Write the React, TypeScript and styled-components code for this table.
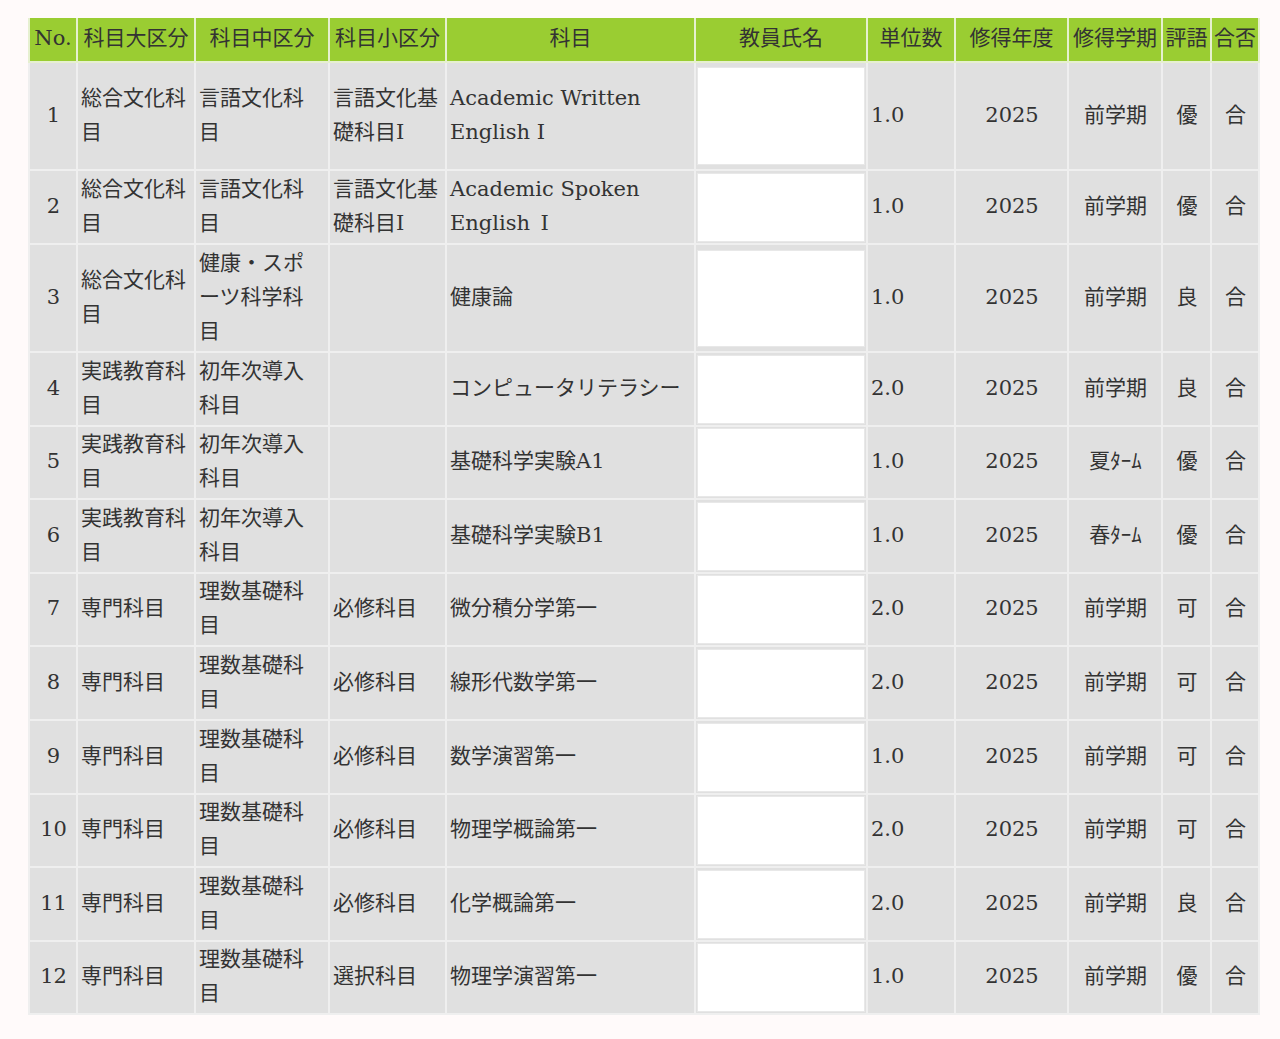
import React from "react";
import styled, { createGlobalStyle } from "styled-components";

const Global = createGlobalStyle`
  html, body { margin: 0; padding: 0; background: #fffafa; }
  body { font-family: "DejaVu Serif", "Noto Sans CJK JP", serif; color: #333; }
`;

const Page = styled.div`
  padding: 18px 22px 24px 28px;
`;

const Table = styled.table`
  width: 1230px;
  table-layout: fixed;
  border-collapse: collapse;
  font-size: 21px;
  line-height: 34px;
`;

const HeadCell = styled.th`
  background: #9acd32;
  color: #333;
  font-weight: 400;
  font-size: 21px;
  line-height: 30px;
  text-align: center;
  height: 40px;
  padding: 0 0 3px;
  white-space: nowrap;
  border: 2px solid #e6f0d0;
  border-top: none;
`;

const Row = styled.tr<{ $h: number }>`
  height: ${(p) => p.$h}px;
`;

const Cell = styled.td<{ $align?: string; $padR?: number }>`
  background: #e0e0e0;
  border: 2px solid #efefef;
  padding: 0 ${(p) => p.$padR ?? 2}px 3px 3px;
  vertical-align: middle;
  text-align: ${(p) => p.$align || "left"};
  word-break: break-all;
  line-break: anywhere;
`;

const SubjectCell = styled(Cell)`
  word-break: normal;
  line-break: auto;
`;

const NameCell = styled.td`
  background: #e0e0e0;
  border: 2px solid #efefef;
  padding: 0 1px;
  vertical-align: middle;
`;

const NameBox = styled.div<{ $h: number }>`
  background: #fff;
  height: ${(p) => p.$h}px;
  border: 1px solid #e8e8e8;
`;

type R = {
  no: number;
  a: string;
  b: string;
  c: string;
  s: string;
  unit: string;
  term: string;
  grade: string;
  h: number;
  box: number;
};

const rows: R[] = [
  { no: 1, a: "総合文化科目", b: "言語文化科目", c: "言語文化基礎科目I", s: "Academic Written English I", unit: "1.0", term: "前学期", grade: "優", h: 108, box: 96 },
  { no: 2, a: "総合文化科目", b: "言語文化科目", c: "言語文化基礎科目I", s: "Academic Spoken English\u2002I", unit: "1.0", term: "前学期", grade: "優", h: 74, box: 67 },
  { no: 3, a: "総合文化科目", b: "健康・スポーツ科学科目", c: "", s: "健康論", unit: "1.0", term: "前学期", grade: "良", h: 108, box: 95 },
  { no: 4, a: "実践教育科目", b: "初年次導入科目", c: "", s: "コンピュータリテラシー", unit: "2.0", term: "前学期", grade: "良", h: 74, box: 67 },
  { no: 5, a: "実践教育科目", b: "初年次導入科目", c: "", s: "基礎科学実験A1", unit: "1.0", term: "夏ﾀｰﾑ", grade: "優", h: 73, box: 67 },
  { no: 6, a: "実践教育科目", b: "初年次導入科目", c: "", s: "基礎科学実験B1", unit: "1.0", term: "春ﾀｰﾑ", grade: "優", h: 74, box: 67 },
  { no: 7, a: "専門科目", b: "理数基礎科目", c: "必修科目", s: "微分積分学第一", unit: "2.0", term: "前学期", grade: "可", h: 73, box: 67 },
  { no: 8, a: "専門科目", b: "理数基礎科目", c: "必修科目", s: "線形代数学第一", unit: "2.0", term: "前学期", grade: "可", h: 74, box: 67 },
  { no: 9, a: "専門科目", b: "理数基礎科目", c: "必修科目", s: "数学演習第一", unit: "1.0", term: "前学期", grade: "可", h: 74, box: 67 },
  { no: 10, a: "専門科目", b: "理数基礎科目", c: "必修科目", s: "物理学概論第一", unit: "2.0", term: "前学期", grade: "可", h: 73, box: 67 },
  { no: 11, a: "専門科目", b: "理数基礎科目", c: "必修科目", s: "化学概論第一", unit: "2.0", term: "前学期", grade: "良", h: 74, box: 67 },
  { no: 12, a: "専門科目", b: "理数基礎科目", c: "選択科目", s: "物理学演習第一", unit: "1.0", term: "前学期", grade: "優", h: 72, box: 67 },
];

const widths = [48, 118, 134, 117, 249, 172, 88, 113, 94, 49, 48];
const heads = ["No.", "科目大区分", "科目中区分", "科目小区分", "科目", "教員氏名", "単位数", "修得年度", "修得学期", "評語", "合否"];

export default function App() {
  return (
    <>
      <Global />
      <Page>
        <Table>
          <colgroup>
            {widths.map((w, i) => (
              <col key={i} style={{ width: w }} />
            ))}
          </colgroup>
          <thead>
            <tr>
              {heads.map((h) => (
                <HeadCell key={h}>{h}</HeadCell>
              ))}
            </tr>
          </thead>
          <tbody>
            {rows.map((r) => (
              <Row key={r.no} $h={r.h}>
                <Cell $align="center">{r.no}</Cell>
                <Cell>{r.a}</Cell>
                <Cell $padR={12}>{r.b}</Cell>
                <Cell>{r.c}</Cell>
                <SubjectCell>{r.s}</SubjectCell>
                <NameCell>
                  <NameBox $h={r.box} />
                </NameCell>
                <Cell>{r.unit}</Cell>
                <Cell $align="center">2025</Cell>
                <Cell $align="center">{r.term}</Cell>
                <Cell $align="center">{r.grade}</Cell>
                <Cell $align="center">合</Cell>
              </Row>
            ))}
          </tbody>
        </Table>
      </Page>
    </>
  );
}
